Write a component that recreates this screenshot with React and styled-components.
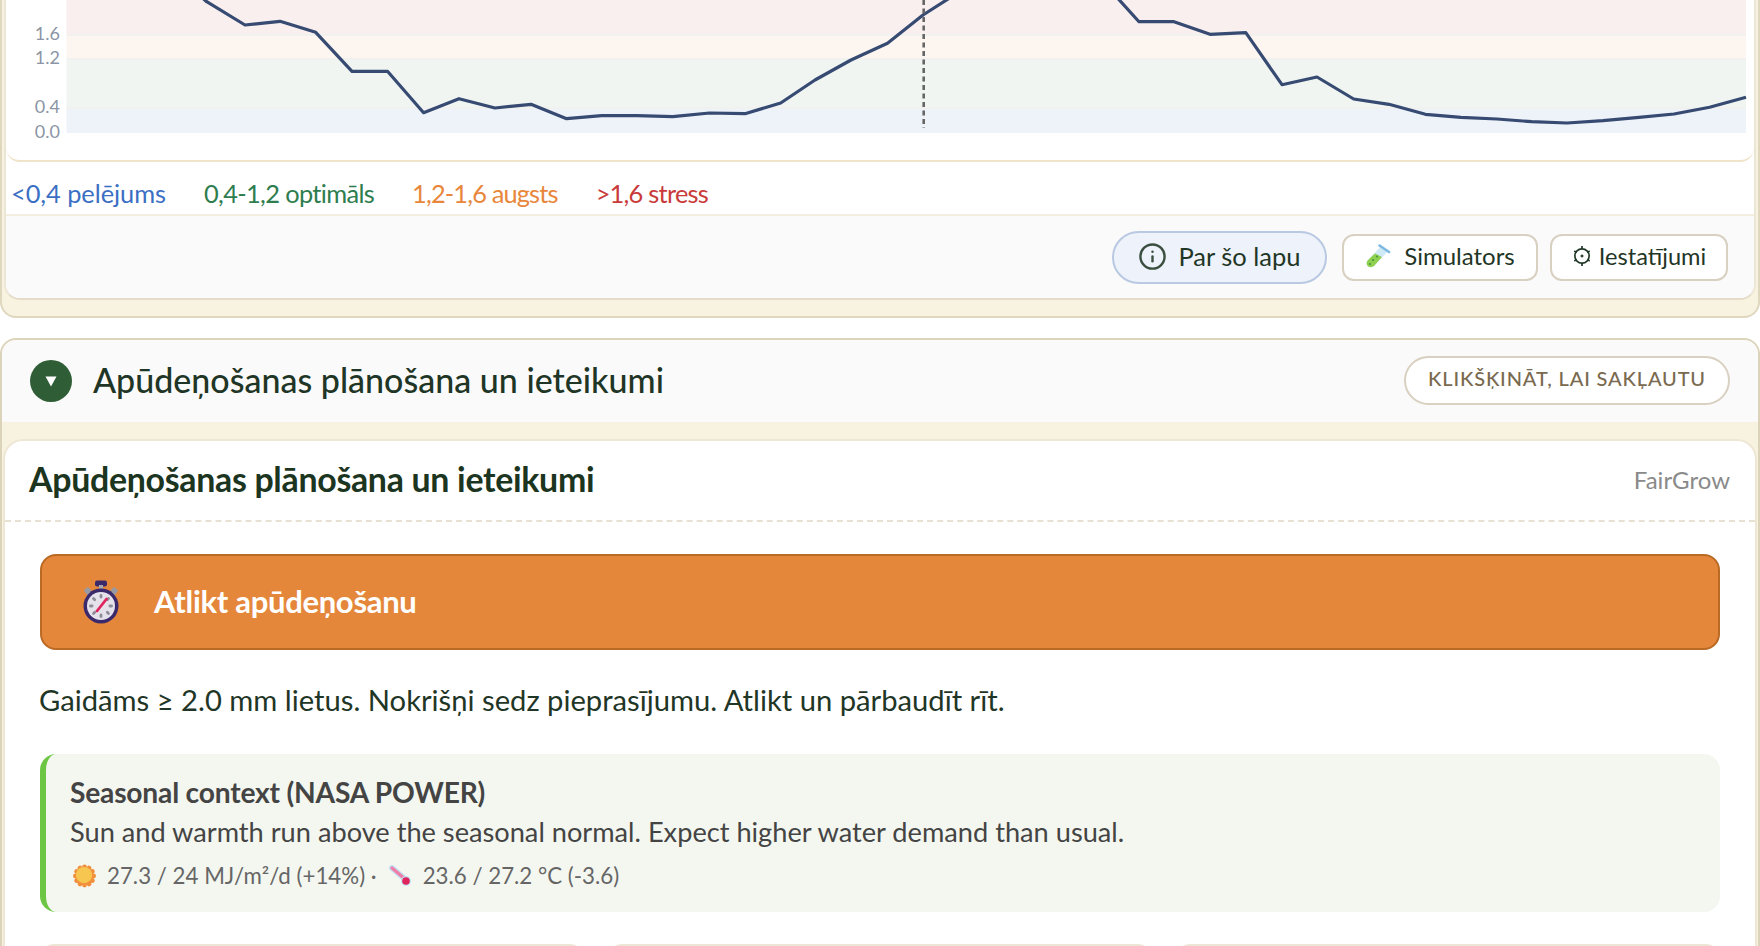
import React from 'react';
import styled, { createGlobalStyle } from 'styled-components';
import { Info } from 'lucide-react';

const GlobalStyle = createGlobalStyle`
  html, body {
    margin: 0;
    height: 946px;
    overflow: hidden;
    background: #fff;
    font-family: 'Lato', 'Noto Sans', sans-serif;
  }
`;

const Page = styled.div`
  display: flex;
  flex-direction: column;
  gap: 20px;
  width: 1760px;
`;

const TopPanel = styled.section`
  box-sizing: border-box;
  height: 318px;
  padding: 0 2px 16px;
  background: #f8f2e0;
  border: 2px solid #e0d7bf;
  border-top: none;
  border-radius: 0 0 16px 16px;
`;

const TopCard = styled.div`
  box-sizing: border-box;
  height: 300px;
  display: flex;
  flex-direction: column;
  background: #fff;
  border-right: 2px solid #ece6d6;
  border-left: 2px solid #ece6d6;
  border-bottom: 2px solid #e4dcc8;
  border-radius: 0 0 16px 16px;
  overflow: hidden;
`;

const ChartCard = styled.div`
  height: 160px;
  flex: none;
  border-bottom: 2px solid #efe4c8;
  border-radius: 0 0 14px 14px;
  overflow: hidden;
`;

const ChartSvg = styled.svg`
  display: block;
  width: 1748px;
  height: 160px;
`;

const AxisLabel = styled.text`
  font-family: 'Lato', sans-serif;
  font-size: 18px;
  fill: #8b95a5;
  text-anchor: end;
`;

const Legend = styled.div`
  box-sizing: border-box;
  height: 52px;
  flex: none;
  display: flex;
  align-items: center;
  gap: 38px;
  padding: 9px 0 0 5px;
`;

const LegendItem = styled.span`
  font-size: 25.4px;
  letter-spacing: ${({ $spacing }) => $spacing}px;
  color: ${({ $color }) => $color};
`;

const Footer = styled.div`
  flex: 1;
  display: flex;
  align-items: center;
  justify-content: flex-end;
  gap: 12px;
  padding-right: 26px;
  background: #fafafa;
  border-top: 2px solid #f3eee0;
`;

const AboutButton = styled.button`
  box-sizing: border-box;
  width: 215px;
  height: 53px;
  margin-right: 3px;
  padding: 0 0 2px;
  display: inline-flex;
  align-items: center;
  justify-content: center;
  gap: 11px;
  font: 400 25.5px 'Lato', sans-serif;
  color: #1f3626;
  background: #edf2fb;
  border: 2px solid #b9c9e2;
  border-radius: 27px;
`;

const ToolButton = styled.button`
  box-sizing: border-box;
  width: ${({ $width }) => $width}px;
  height: 47px;
  padding: 0 0 3px;
  display: inline-flex;
  align-items: center;
  justify-content: center;
  gap: ${({ $gap }) => $gap}px;
  font: 400 ${({ $size }) => $size}px 'Lato', sans-serif;
  color: #1f3626;
  background: #fff;
  border: 2px solid #d8d0c0;
  border-radius: 12px;
`;

const PlanPanel = styled.section`
  box-sizing: border-box;
  background: #f8f2e0;
  border: 2px solid #dcd3bb;
  border-radius: 16px 16px 0 0;
  padding-bottom: 20px;
`;

const PlanHeader = styled.div`
  box-sizing: border-box;
  height: 82px;
  display: flex;
  align-items: center;
  padding: 0 28px;
  background: #fafafa;
  border-radius: 14px 14px 0 0;
`;

const Chevron = styled.span`
  width: 42px;
  height: 42px;
  flex: none;
  display: flex;
  align-items: center;
  justify-content: center;
  background: #2f5d36;
  border-radius: 50%;
`;

const PlanTitle = styled.h2`
  flex: 1;
  margin: 0 0 3px 21px;
  font-size: 34px;
  font-weight: 500;
  color: #1f3626;
`;

const CollapseHint = styled.span`
  box-sizing: border-box;
  width: 326px;
  height: 49px;
  margin-bottom: 2px;
  padding-bottom: 4px;
  display: flex;
  align-items: center;
  justify-content: center;
  background: #fff;
  border: 2px solid #d8d0c0;
  border-radius: 25px;
  font-size: 20px;
  font-weight: 500;
  letter-spacing: 0.85px;
  color: #7a6a4f;
  text-transform: uppercase;
`;

const AdviceCard = styled.div`
  margin: 17px 1px 0;
  background: #fff;
  border: 2px solid #efe7d5;
  border-bottom: none;
  border-radius: 20px 20px 0 0;
`;

const AdviceHead = styled.div`
  box-sizing: border-box;
  height: 81px;
  padding: 0 25px 3px 24px;
  display: flex;
  align-items: center;
  justify-content: space-between;
  border-bottom: 2px dashed #e6e1d2;
`;

const AdviceTitle = styled.h3`
  margin: 0;
  font-size: 33.9px;
  font-weight: 700;
  letter-spacing: -0.3px;
  color: #1c3520;
`;

const Brand = styled.span`
  font-size: 24px;
  color: #8a8a8a;
`;

const AdviceBody = styled.div`
  padding: 32px 35px 0;
`;

const ActionBanner = styled.div`
  box-sizing: border-box;
  height: 96px;
  display: flex;
  align-items: center;
  gap: 35px;
  padding-left: 41px;
  background: #e5873b;
  border: 2px solid #b96a25;
  border-radius: 16px;
`;

const ActionText = styled.span`
  margin-bottom: 2px;
  font-size: 31px;
  font-weight: 700;
  letter-spacing: -0.3px;
  color: #fff;
`;

const Reason = styled.p`
  margin: 30px 0 34px -1px;
  font-size: 29.2px;
  line-height: 40px;
  color: #1f3626;
`;

const SeasonBox = styled.div`
  box-sizing: border-box;
  height: 158px;
  padding: 20px 30px 0 24px;
  background: #f4f7f0;
  border-left: 6px solid #6cc644;
  border-radius: 16px;
`;

const SeasonTitle = styled.div`
  font-size: 28.2px;
  font-weight: 700;
  line-height: 36px;
  letter-spacing: -0.2px;
  color: #444;
`;

const SeasonText = styled.div`
  margin-top: 4px;
  font-size: 27.2px;
  line-height: 36px;
  color: #444;
`;

const SeasonMeta = styled.div`
  margin-top: 8px;
  display: flex;
  align-items: center;
  gap: 11px;
  padding-left: 3px;
  font-size: 22.3px;
  line-height: 36px;
  color: #666;
`;

const CardRow = styled.div`
  display: grid;
  grid-template-columns: repeat(3, 1fr);
  gap: 24px;
  margin-top: 32px;
`;

const MiniCard = styled.div`
  height: 60px;
  background: #fff;
  border: 2px solid #ede5d5;
  border-radius: 14px;
`;

// sampled off the reference, page pixels
const linePoints = [
  [171, -30], [206.7, 1.7], [245, 25], [280, 21.3], [315.7, 32.3], [352, 71.3], [387.5, 71.3],
  [423.6, 112.7], [459, 98.7], [495, 108], [531, 104.3], [566.6, 118.7], [601.6, 115.7],
  [637, 115.7], [672.8, 116.7], [709.5, 113], [745, 113.7], [780.7, 103], [815, 80],
  [851, 60], [887.5, 43.3], [923, 15], [959, -8], [1103, -18], [1139, 21.7], [1174, 21.7],
  [1210, 34.3], [1245.8, 32.7], [1282, 84.7], [1317, 77], [1353.7, 99], [1389, 104.3],
  [1425.4, 114.3], [1461, 117.3], [1497, 119], [1531.6, 121.7], [1567, 123], [1603, 120.7],
  [1639, 117.3], [1674, 114], [1709.6, 107.3], [1746, 97.3],
];

const bands = [
  { y: 0, h: 34, fill: '#f9efee' },
  { y: 36, h: 22, fill: '#fdf5f0' },
  { y: 60, h: 47, fill: '#f0f5f2' },
  { y: 109, h: 24, fill: '#eef2f9' },
];

const ticks = [
  { label: '1.6', y: 40 },
  { label: '1.2', y: 64 },
  { label: '0.4', y: 113 },
  { label: '0.0', y: 138 },
];

const legend = [
  { text: '<0,4 pelējums', color: '#3b6fc4', spacing: -0.05 },
  { text: '0,4-1,2 optimāls', color: '#2e7d4f', spacing: -0.65 },
  { text: '1,2-1,6 augsts', color: '#e8873c', spacing: -0.85 },
  { text: '>1,6 stress', color: '#c93a3a', spacing: -0.75 },
];

const MoistureChart = () => (
  <ChartSvg viewBox="6 0 1748 160">
    {bands.map((b) => (
      <rect key={b.y} x="66.5" y={b.y} width="1679.5" height={b.h} fill={b.fill} />
    ))}
    {[34, 58, 107].map((y) => (
      <rect key={y} x="66.5" y={y} width="1679.5" height="2" fill="#f1f1f0" />
    ))}
    {ticks.map((t) => (
      <AxisLabel key={t.label} x="60" y={t.y}>{t.label}</AxisLabel>
    ))}
    <polyline
      points={linePoints.map((p) => p.join(',')).join(' ')}
      fill="none"
      stroke="#364a72"
      strokeWidth="3.2"
      strokeLinejoin="round"
    />
    <line x1="923.7" y1="0" x2="923.7" y2="128" stroke="#666" strokeWidth="2.6" strokeDasharray="5 3.5" />
  </ChartSvg>
);

const Stopwatch = () => (
  <svg width="36" height="44" viewBox="0 0 36 44">
    <rect x="12" y="0.5" width="12" height="6" rx="2" fill="#3b2a6b" />
    <rect x="16" y="5" width="4" height="4" fill="#a8a8b0" />
    <rect x="2.5" y="8" width="6" height="8" rx="1.5" fill="#9a9aa2" transform="rotate(-38 5 12)" />
    <rect x="27.5" y="8" width="6" height="8" rx="1.5" fill="#9a9aa2" transform="rotate(38 31 12)" />
    <circle cx="18" cy="26" r="17.5" fill="#3b2a6b" />
    <circle cx="18" cy="26" r="14" fill="#e6e2ec" />
    {[0, 45, 90, 135, 180, 225, 270, 315].map((a) => (
      <rect key={a} x="16.6" y="14" width="2.8" height="4.5" rx="1.4" fill="#8f8d98" transform={`rotate(${a} 18 26)`} />
    ))}
    <path d="M14 31L23.5 19" stroke="#e0245e" strokeWidth="2.8" strokeLinecap="round" />
  </svg>
);

const TestTube = () => (
  <svg width="26" height="24" viewBox="0 0 26 24">
    <path d="M16 2l7 5L9 22c-2 1.6-5 1.5-6.5-.3C1.2 20 1.4 17.5 3 16z" fill="#cfeaf6" />
    <path d="M10 9.5l7 3.5L9 22c-2 1.6-5 1.5-6.5-.3C1.2 20 1.4 17.5 3 16z" fill="#8fd14f" />
    <path d="M14.5 1.5l9.5 6.500" stroke="#7db9e0" strokeWidth="2.6" strokeLinecap="round" />
    <circle cx="8" cy="16" r="1" fill="#3f8f3f" />
    <circle cx="12" cy="12.5" r="1" fill="#3f8f3f" />
    <circle cx="5" cy="20" r="1" fill="#3f8f3f" />
  </svg>
);

const GearGlyph = () => (
  <svg width="20" height="22" viewBox="0 0 18 20" fill="none" stroke="#1f3626">
    <circle cx="9" cy="10" r="6.5" strokeWidth="1.5" />
    <circle cx="9" cy="10" r="1" fill="#1f3626" strokeWidth="0.8" />
    <path d="M9 1v2.5M9 16.5V19M2 5.5l2 1.2M14 13.3l2 1.2M2 14.5l2-1.2M14 6.7l2-1.2" strokeWidth="1.5" />
  </svg>
);

const sunRays = [0, 30, 60, 90, 120, 150, 180, 210, 240, 270, 300, 330];

const Sun = () => (
  <svg width="23" height="24" viewBox="0 0 24 24">
    {sunRays.map((a) => (
      <circle key={a} cx="12" cy="2.5" r="2.5" fill="#f0903c" transform={`rotate(${a} 12 12)`} />
    ))}
    <circle cx="12" cy="12" r="9.5" fill="#f28f3b" />
    <circle cx="11.5" cy="11" r="8.5" fill="#f6c650" />
  </svg>
);

const Thermometer = () => (
  <svg width="24" height="22" viewBox="0 0 24 22">
    <path d="M4 3l13 11" stroke="#c3e2f5" strokeWidth="6" strokeLinecap="round" />
    <path d="M4 3l13 11" stroke="#ef7fa6" strokeWidth="3.2" strokeLinecap="round" />
    <circle cx="18" cy="16" r="5" fill="#c3e2f5" />
    <circle cx="18" cy="16" r="3.8" fill="#e0245e" />
  </svg>
);

const App = () => (
  <>
    <GlobalStyle />
    <Page>
      <TopPanel>
        <TopCard>
          <ChartCard>
            <MoistureChart />
          </ChartCard>
          <Legend>
            {legend.map((item) => (
              <LegendItem key={item.text} $color={item.color} $spacing={item.spacing}>{item.text}</LegendItem>
            ))}
          </Legend>
          <Footer>
            <AboutButton>
              <Info size={29} color="#3a4f40" strokeWidth={2} />
              Par šo lapu
            </AboutButton>
            <ToolButton $width={196} $gap={13} $size={24}>
              <TestTube />
              Simulators
            </ToolButton>
            <ToolButton $width={178} $gap={7} $size={23.6}>
              <GearGlyph />
              Iestatījumi
            </ToolButton>
          </Footer>
        </TopCard>
      </TopPanel>
      <PlanPanel>
        <PlanHeader>
          <Chevron>
            <svg width="12" height="11" viewBox="0 0 12 11">
              <path d="M0.5 0.5h11L6 10.5z" fill="#fff" />
            </svg>
          </Chevron>
          <PlanTitle>Apūdeņošanas plānošana un ieteikumi</PlanTitle>
          <CollapseHint>Klikšķināt, lai sakļautu</CollapseHint>
        </PlanHeader>
        <AdviceCard>
          <AdviceHead>
            <AdviceTitle>Apūdeņošanas plānošana un ieteikumi</AdviceTitle>
            <Brand>FairGrow</Brand>
          </AdviceHead>
          <AdviceBody>
            <ActionBanner>
              <Stopwatch />
              <ActionText>Atlikt apūdeņošanu</ActionText>
            </ActionBanner>
            <Reason>Gaidāms ≥ 2.0 mm lietus. Nokrišņi sedz pieprasījumu. Atlikt un pārbaudīt rīt.</Reason>
            <SeasonBox>
              <SeasonTitle>Seasonal context (NASA POWER)</SeasonTitle>
              <SeasonText>Sun and warmth run above the seasonal normal. Expect higher water demand than usual.</SeasonText>
              <SeasonMeta>
                <Sun />
                <span>27.3 / 24 MJ/m²/d (+14%) ·</span>
                <Thermometer />
                <span>23.6 / 27.2 °C (-3.6)</span>
              </SeasonMeta>
            </SeasonBox>
            <CardRow>
              <MiniCard />
              <MiniCard />
              <MiniCard />
            </CardRow>
          </AdviceBody>
        </AdviceCard>
      </PlanPanel>
    </Page>
  </>
);

export default App;
